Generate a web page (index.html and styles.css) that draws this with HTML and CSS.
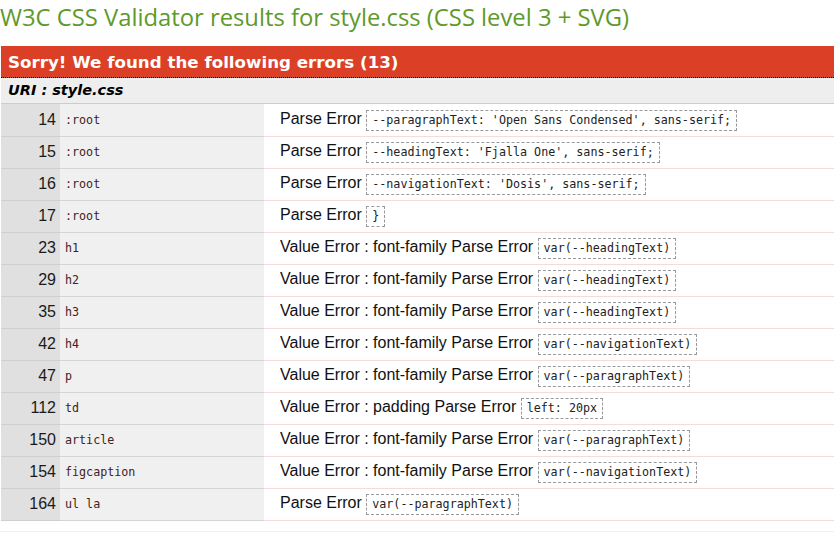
FILE: index.html
```html
<!DOCTYPE html>
<html lang="en">
<head>
<meta charset="utf-8">
<title>W3C CSS Validator results</title>
<link rel="stylesheet" href="styles.css">
</head>
<body>
<h2 class="title">W3C CSS Validator results for style.css (CSS level 3 + SVG)</h2>
<div class="errors">
  <h3 class="errors-head">Sorry! We found the following errors (13)</h3>
  <h4 class="uri">URI : <span>style.css</span></h4>
  <table class="error-table">
    <tr><td class="num">14</td><td class="sel">:root</td><td class="msg">Parse Error <span class="code">--paragraphText: 'Open Sans Condensed', sans-serif;</span></td></tr>
    <tr><td class="num">15</td><td class="sel">:root</td><td class="msg">Parse Error <span class="code">--headingText: 'Fjalla One', sans-serif;</span></td></tr>
    <tr><td class="num">16</td><td class="sel">:root</td><td class="msg">Parse Error <span class="code">--navigationText: 'Dosis', sans-serif;</span></td></tr>
    <tr><td class="num">17</td><td class="sel">:root</td><td class="msg">Parse Error <span class="code">}</span></td></tr>
    <tr><td class="num">23</td><td class="sel">h1</td><td class="msg">Value Error : font-family Parse Error <span class="code">var(--headingText)</span></td></tr>
    <tr><td class="num">29</td><td class="sel">h2</td><td class="msg">Value Error : font-family Parse Error <span class="code">var(--headingText)</span></td></tr>
    <tr><td class="num">35</td><td class="sel">h3</td><td class="msg">Value Error : font-family Parse Error <span class="code">var(--headingText)</span></td></tr>
    <tr><td class="num">42</td><td class="sel">h4</td><td class="msg">Value Error : font-family Parse Error <span class="code">var(--navigationText)</span></td></tr>
    <tr><td class="num">47</td><td class="sel">p</td><td class="msg">Value Error : font-family Parse Error <span class="code">var(--paragraphText)</span></td></tr>
    <tr><td class="num">112</td><td class="sel">td</td><td class="msg">Value Error : padding Parse Error <span class="code">left: 20px</span></td></tr>
    <tr><td class="num">150</td><td class="sel">article</td><td class="msg">Value Error : font-family Parse Error <span class="code">var(--paragraphText)</span></td></tr>
    <tr><td class="num">154</td><td class="sel">figcaption</td><td class="msg">Value Error : font-family Parse Error <span class="code">var(--navigationText)</span></td></tr>
    <tr><td class="num">164</td><td class="sel">ul la</td><td class="msg">Parse Error <span class="code">var(--paragraphText)</span></td></tr>
  </table>
</div>
<div class="after"></div>
</body>
</html>
```

FILE: styles.css
```css
html, body {
  margin: 0;
  padding: 0;
  background: #fff;
}

body {
  font-family: "Liberation Sans", Arial, sans-serif;
  color: #000;
}

.title {
  margin: 0;
  padding: 2px 0 0 0;
  height: 43px;
  box-sizing: border-box;
  font-family: "Open Sans", "DejaVu Sans", sans-serif;
  font-weight: normal;
  font-size: 23.8px;
  line-height: 30px;
  color: #5e9a2a;
  white-space: nowrap;
}

.errors {
  margin-left: 1px;
  border-top: 3px solid #fff;
}

.errors-head {
  margin: 0;
  height: 32px;
  box-sizing: border-box;
  background: #db4027;
  color: #fff;
  font-family: "DejaVu Sans", Verdana, sans-serif;
  font-weight: bold;
  font-size: 16.7px;
  line-height: 30px;
  padding: 1px 0 0 7px;
  border-bottom: 1px dotted #000;
}

.uri {
  margin: 0;
  height: 26px;
  box-sizing: border-box;
  background: #eee;
  border-bottom: 1px solid #ccc;
  font-family: "DejaVu Sans", Verdana, sans-serif;
  font-weight: bold;
  font-style: italic;
  font-size: 14.5px;
  line-height: 24px;
  padding-left: 7px;
}

.error-table {
  width: 100%;
  border-collapse: collapse;
}

.error-table td {
  height: 32px;
  padding: 0;
  box-sizing: border-box;
  vertical-align: middle;
}

.num {
  width: 59px;
  background: #e0e0e0;
  border-bottom: 1px solid #cfcfcf;
  text-align: right;
  font-size: 16px;
  color: #1a1a1a;
  padding-right: 4px !important;
}

.sel {
  width: 204px;
  background: #f0f0f0;
  border-bottom: 1px solid #d4d4d4;
  font-family: "DejaVu Sans Mono", "Liberation Mono", monospace;
  font-size: 11.7px;
  color: #422;
  padding-left: 5px !important;
}

.msg {
  border-bottom: 1px solid #f4ddd9;
  padding-left: 16px !important;
  font-size: 16px;
  line-height: 20px;
  color: #111;
  white-space: nowrap;
}

.code {
  display: inline-block;
  border: 1px dashed #999;
  padding: 2px 5px 3px 5px;
  font-family: "DejaVu Sans Mono", "Liberation Mono", monospace;
  font-size: 11.7px;
  line-height: 14px;
  color: #222;
  vertical-align: baseline;
}

.after {
  margin-top: 10px;
  height: 1px;
  background: #eeeefb;
}
```
